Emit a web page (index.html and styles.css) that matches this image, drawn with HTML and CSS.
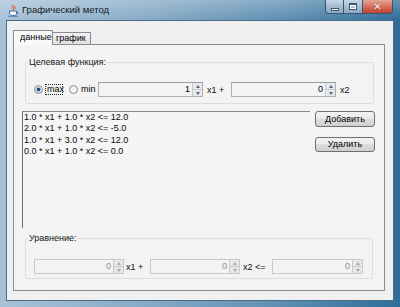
FILE: index.html
```html
<!DOCTYPE html>
<html lang="ru">
<head>
  <meta charset="UTF-8">
  <title>Графический метод</title>
  <link rel="stylesheet" href="styles.css">
</head>
<body>
  <div class="window">
    <!-- Title bar -->
    <div class="titlebar">
      <svg class="app-icon" width="11" height="13" viewBox="0 0 11 13">
        <path d="M5 1 C3 3 7 4 5 6" stroke="#e0542a" stroke-width="1.2" fill="none"/>
        <path d="M7 2 C6 3 8 4 7 5" stroke="#e0542a" stroke-width="1" fill="none"/>
        <path d="M1.5 7 H8.5 V9.5 C8.5 11 7 11.5 5 11.5 C3 11.5 1.5 11 1.5 9.5 Z" fill="#f4f7fa" stroke="#3f6f9f" stroke-width="1"/>
        <path d="M8.5 8 H9.8 V9.6 H8.5" stroke="#3f6f9f" stroke-width="0.8" fill="none"/>
        <path d="M0.5 12.3 H10" stroke="#3f6f9f" stroke-width="0.8"/>
      </svg>
      <span class="title">Графический метод</span>
      <div class="caption-buttons">
        <div class="cap-btn cap-min"><span class="min-bar"></span></div>
        <div class="cap-btn cap-max"><span class="max-box"></span></div>
        <div class="cap-btn cap-close">✕</div>
      </div>
    </div>

    <!-- Client area -->
    <div class="client">
      <div class="tabs">
        <div class="tab active">данные</div>
        <div class="tab">график</div>
      </div>

      <div class="tab-panel">
        <!-- Target function -->
        <div class="group group-goal">
          <div class="group-title">Целевая функция:</div>
          <div class="group-row">
            <span class="radio checked"></span>
            <span class="radio-label focused">max</span>
            <span class="radio radio-min"></span>
            <span class="radio-label label-min">min</span>
            <div class="spinner sp-goal">
              <div class="sp-field">1</div>
              <div class="sp-arrows"><span class="up"></span><span class="down"></span></div>
            </div>
            <span class="term term-x1">x1 +</span>
            <div class="spinner sp-goal sp-second">
              <div class="sp-field">0</div>
              <div class="sp-arrows"><span class="up"></span><span class="down"></span></div>
            </div>
            <span class="term term-x2">x2</span>
          </div>
        </div>

        <!-- Constraints list and buttons -->
        <div class="middle">
          <div class="constraints">
            <div>1.0 * x1 + 1.0 * x2 &lt;= 12.0</div>
            <div>2.0 * x1 + 1.0 * x2 &lt;= -5.0</div>
            <div>1.0 * x1 + 3.0 * x2 &lt;= 12.0</div>
            <div>0.0 * x1 + 1.0 * x2 &lt;= 0.0</div>
          </div>
          <div class="side-buttons">
            <button class="btn">Добавить</button>
            <button class="btn btn-del">Удалить</button>
          </div>
        </div>

        <!-- New equation -->
        <div class="group group-eq">
          <div class="group-title">Уравнение:</div>
          <div class="group-row">
            <div class="spinner sp-eq disabled">
              <div class="sp-field">0</div>
              <div class="sp-arrows"><span class="up"></span><span class="down"></span></div>
            </div>
            <span class="term eq-x1">x1 +</span>
            <div class="spinner sp-eq disabled">
              <div class="sp-field">0</div>
              <div class="sp-arrows"><span class="up"></span><span class="down"></span></div>
            </div>
            <span class="term eq-x2">x2 &lt;=</span>
            <div class="spinner sp-eq sp-last disabled">
              <div class="sp-field">0</div>
              <div class="sp-arrows"><span class="up"></span><span class="down"></span></div>
            </div>
          </div>
        </div>
      </div>
    </div>
  </div>
</body>
</html>
```

FILE: styles.css
```css
/* Reset */
* { margin: 0; padding: 0; box-sizing: border-box; }

body {
  width: 400px;
  height: 307px;
  overflow: hidden;
  font-family: "Liberation Sans", Arial, sans-serif;
  font-size: 9px;
  color: #000;
  background: #6f9cbd;
}

/* Window frame */
.window {
  width: 400px;
  height: 307px;
  background: linear-gradient(to right, #a7c2d8 0%, #88abc7 35%, #5f8fb3 70%, #2f6d98 100%);
}

/* Title bar */
.titlebar {
  height: 20px;
  display: flex;
  align-items: flex-start;
  background: linear-gradient(to bottom, rgba(255,255,255,0.25), rgba(255,255,255,0));
}
.app-icon {
  margin: 4px 0 0 8px;
  flex: none;
}
.title {
  margin: 4px 0 0 3px;
  font-size: 9.5px;
  color: #141c24;
  white-space: nowrap;
}
.caption-buttons {
  display: flex;
  margin-left: auto;
  margin-right: 7px;
}
.cap-btn {
  height: 14px;
  border: 1px solid #3b5570;
  border-top: none;
  display: flex;
  align-items: center;
  justify-content: center;
}
.cap-min {
  width: 18px;
  border-radius: 0 0 0 4px;
  border-right: none;
  background: linear-gradient(to bottom, #c6d8e6, #a3bdd2 50%, #8aa9c2);
}
.cap-max {
  width: 19px;
  border-right: none;
  background: linear-gradient(to bottom, #c6d8e6, #a3bdd2 50%, #8aa9c2);
}
.cap-close {
  width: 31px;
  border-radius: 0 0 4px 0;
  background: linear-gradient(to bottom, #e6a597, #d56f5d 50%, #c2412c);
  color: #fff;
  font-size: 10px;
  font-weight: bold;
  font-family: "DejaVu Sans", sans-serif;
  text-shadow: 0 0 1px #5a1a10;
}
.min-bar {
  width: 8px;
  height: 3px;
  margin-top: 5px;
  background: #fff;
  border: 1px solid #40566c;
}
.max-box {
  width: 8px;
  height: 7px;
  border: 1px solid #40566c;
  border-top-width: 2px;
  background: #a9c1d4;
  box-shadow: inset 0 0 0 1px #fff;
}

/* Client area */
.client {
  margin-left: 6px;
  width: 388px;
  height: 281px;
  border: 1px solid #4b6a84;
  background: #f0f0f0;
  padding: 9px 0 0 6px;
}

/* Tabs */
.tabs {
  display: flex;
  align-items: flex-end;
  height: 14px;
}
.tab {
  height: 12px;
  padding: 0 4px 0 3px;
  border: 1px solid #898c95;
  border-bottom: none;
  border-left: none;
  background: linear-gradient(to bottom, #f2f2f2, #e0e0e0);
  line-height: 11px;
}
.tab.active {
  height: 15px;
  margin-bottom: -1px;
  position: relative;
  z-index: 1;
  width: 40px;
  padding-left: 6px;
  border-left: 1px solid #898c95;
  background: #f9f9f9;
  line-height: 13px;
}
.tab-panel {
  width: 372px;
  height: 247px;
  border: 1px solid #898c95;
  background: #f3f3f3;
}

/* Group boxes */
.group {
  margin-left: 11px;
  width: 349px;
  height: 42px;
  border: 1px solid #d5dfe5;
  border-radius: 2px;
}
.group-goal { margin-top: 17px; }
.group-eq { margin-top: 10px; width: 348px; height: 41px; }
.group-title {
  display: inline-block;
  height: 11px;
  margin: -6px 0 0 2px;
  padding: 0 1px;
  background: #f3f3f3;
  line-height: 11px;
  vertical-align: top;
  color: #151515;
}
.group-row {
  display: flex;
  align-items: center;
  height: 15px;
  margin-top: 9px;
}
.group-eq .group-row { margin-top: 10px; }

/* Radios */
.radio {
  width: 9px;
  height: 9px;
  margin-left: 8px;
  border-radius: 50%;
  border: 1px solid #8e8f8f;
  background: radial-gradient(circle, #f4f4f4 40%, #dadada 100%);
  flex: none;
}
.radio.checked {
  background: radial-gradient(circle, #1b3f78 0%, #2c5fa4 35%, #cfd9e6 45%, #e8e8e8 100%);
}
.radio-min { margin-left: 6px; }
.radio-label {
  margin-left: 2px;
  width: 18px;
  height: 11px;
  line-height: 9px;
  padding-left: 1px;
  flex: none;
}
.radio-label.focused { border: 1px dotted #222; }
.label-min { margin-left: 3px; width: 14px; padding-left: 0; line-height: 11px; }

/* Spinners */
.spinner {
  display: flex;
  height: 15px;
  border: 1px solid #abadb3;
  border-top-color: #9a9da4;
  background: #f3f3f3;
  flex: none;
}
.sp-goal { width: 105px; margin-left: 3px; }
.sp-second { margin-left: 2px; }
.sp-field {
  flex: 1;
  text-align: right;
  padding-right: 2px;
  line-height: 13px;
}
.sp-arrows {
  width: 10px;
  display: flex;
  flex-direction: column;
  border-left: 1px solid #c9cbd0;
  background: #e7e8ea;
}
.sp-arrows span {
  flex: 1;
  display: flex;
  align-items: center;
  justify-content: center;
}
.sp-arrows .up { border-bottom: 1px solid #c9cbd0; }
.sp-arrows .up::after {
  content: "";
  border-left: 2px solid transparent;
  border-right: 2px solid transparent;
  border-bottom: 3px solid #52698c;
}
.sp-arrows .down::after {
  content: "";
  border-left: 2px solid transparent;
  border-right: 2px solid transparent;
  border-top: 3px solid #52698c;
}

.spinner.disabled { border-color: #c7c9cc; }
.spinner.disabled .sp-field { color: #8d8d8d; }
.spinner.disabled .sp-arrows .up::after { border-bottom-color: #a8a8a8; }
.spinner.disabled .sp-arrows .down::after { border-top-color: #a8a8a8; }

.sp-eq { width: 90px; margin-left: 8px; }
.sp-last { width: 91px; }
.term { flex: none; white-space: nowrap; color: #101010; }
.term-x1 { margin-left: 4px; width: 22px; }
.term-x2 { margin-left: 4px; }
.eq-x1 { margin-left: 2px; width: 24px; }
.eq-x1 + .spinner { margin-left: 0; }
.eq-x2 { margin-left: 3px; width: 29px; }
.eq-x2 + .spinner { margin-left: 0; }

/* Constraints area */
.middle {
  display: flex;
  margin-top: 7px;
  height: 117px;
}
.constraints {
  margin-left: 8px;
  width: 288px;
  border-left: 1px solid #6d6d6d;
  border-top: 1px solid #8a8a8a;
  background: #f5f5f5;
  padding-left: 1px;
  line-height: 11.4px;
  color: #0a0a0a;
}
.side-buttons {
  margin-left: 5px;
  display: flex;
  flex-direction: column;
}
.btn {
  width: 60px;
  height: 16px;
  border: 1px solid #707070;
  border-radius: 3px;
  background: linear-gradient(to bottom, #f2f2f2 0%, #ebebeb 45%, #dddddd 50%, #cfcfcf 100%);
  font-family: "Liberation Sans", Arial, sans-serif;
  font-size: 9px;
  color: #000;
  line-height: 14px;
}
.btn-del { margin-top: 10px; height: 15px; line-height: 13px; }
```
